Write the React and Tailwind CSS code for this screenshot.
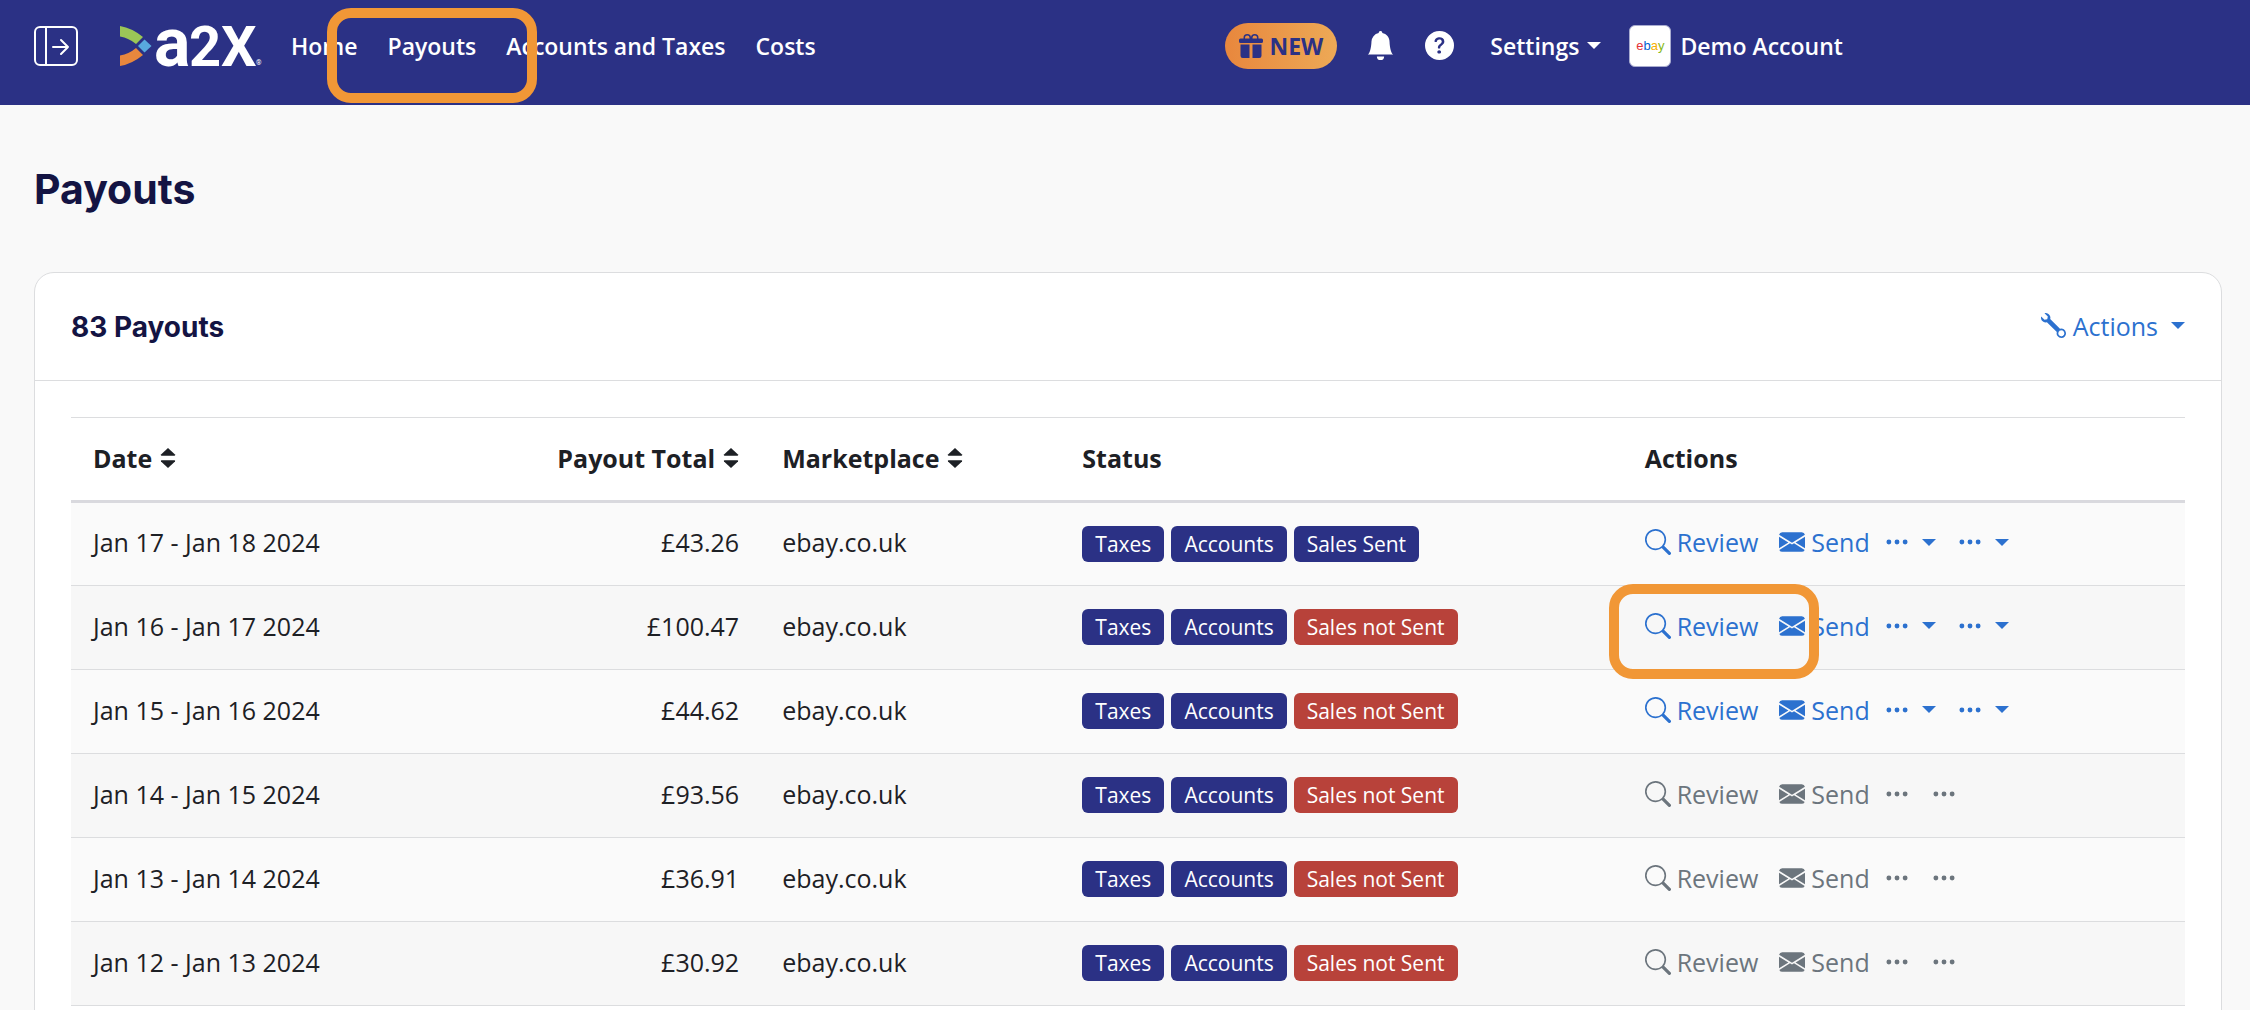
import {
  BsBellFill,
  BsEnvelopeFill,
  BsGiftFill,
  BsQuestionCircleFill,
  BsSearch,
  BsThreeDots,
  BsWrench,
} from 'react-icons/bs';
import clsx from 'clsx';

const payouts = [
  { date: 'Jan 17 - Jan 18 2024', total: '£43.26', sent: true, active: true },
  { date: 'Jan 16 - Jan 17 2024', total: '£100.47', sent: false, active: true, highlight: true },
  { date: 'Jan 15 - Jan 16 2024', total: '£44.62', sent: false, active: true },
  { date: 'Jan 14 - Jan 15 2024', total: '£93.56', sent: false, active: false },
  { date: 'Jan 13 - Jan 14 2024', total: '£36.91', sent: false, active: false },
  { date: 'Jan 12 - Jan 13 2024', total: '£30.92', sent: false, active: false },
];

function Caret() {
  return (
    <svg viewBox="0 0 14 7" className="w-3.5 h-[7px] shrink-0" fill="currentColor" aria-hidden="true">
      <path d="M0 0h14L7 7z" />
    </svg>
  );
}

function SortIcon() {
  return (
    <svg viewBox="0 0 16 20" className="w-4 h-5 shrink-0" fill="currentColor" aria-hidden="true">
      <path d="M8 0l7 6.500q.6 1.300-.8 1.300H1.800Q.4 7.800 1 6.500z" />
      <path d="M8 20l7-6.500q.6-1.300-.8-1.300H1.800Q.4 12.200 1 13.500z" />
    </svg>
  );
}

function Highlight({ className }) {
  return (
    <span
      aria-hidden="true"
      className={clsx('absolute w-[210px] h-[95px] border-10 border-[#f19736] rounded-3xl pointer-events-none z-10', className)}
    />
  );
}

function Logo() {
  return (
    <a href="#" aria-label="a2X">
      <svg viewBox="0 0 142 40" className="w-[142px] h-10 overflow-visible font-['Roboto',sans-serif] font-bold">
        <path d="M0 0q12 2 23 11l-7 7Q9 12 0 10.500z" fill="#9bc657" />
        <path d="M24.500 13.500l7 6.500-7 6.500-6.500-6.500z" fill="#58a9de" />
        <path d="M0 40q12-2 23-11l-7-7Q9 28 0 29.500z" fill="#e8873d" />
        <g fill="#fff">
          <text x="34" y="40" fontSize="68">a</text>
          <text x="69" y="40" fontSize="56">2</text>
          <text x="101" y="40" fontSize="56">X</text>
          <text x="136" y="39" fontSize="7" fontWeight="400">®</text>
        </g>
      </svg>
    </a>
  );
}

function Navbar() {
  return (
    <header className="bg-[#2b3185] text-white">
      <div className="flex items-center h-[105px] px-[34px] pb-3.5 text-[23px] leading-9 font-semibold whitespace-nowrap">
        <button type="button" aria-label="Expand sidebar">
          <svg viewBox="0 0 44 40" className="w-11 h-10" fill="none" stroke="currentColor" strokeWidth="2" strokeLinecap="round" strokeLinejoin="round">
            <rect x="1" y="1" width="42" height="38" rx="5" />
            <path d="M12 1v38M19 21h15M27 14l7 7-7 7" />
          </svg>
        </button>
        <div className="ml-[42px]">
          <Logo />
        </div>
        <nav className="flex gap-[30px] ml-[29px]">
          <a href="#">Home</a>
          <a href="#" className="relative">
            Payouts
            <Highlight className="-left-[61px] -top-5" />
          </a>
          <a href="#">Accounts and Taxes</a>
          <a href="#">Costs</a>
        </nav>
        <div className="flex items-center ml-auto mr-[17.1%]">
          <button type="button" className="flex items-center gap-[7px] h-[46px] px-3.5 rounded-full bg-linear-to-r from-[#e8873d] to-[#eda956] text-[#2b3185] font-bold">
            <BsGiftFill className="size-6" />
            NEW
          </button>
          <button type="button" aria-label="Notifications" className="ml-[29px]">
            <BsBellFill className="size-[29px]" />
          </button>
          <button type="button" aria-label="Help" className="ml-[30px]">
            <BsQuestionCircleFill className="size-[29px]" />
          </button>
          <button type="button" className="flex items-center gap-2 ml-9">
            Settings
            <Caret />
          </button>
          <a href="#" className="flex items-center gap-[9px] ml-7">
            <span className="flex items-center justify-center size-[42px] rounded-md bg-white border border-[#a9acd0] font-['Liberation_Sans',sans-serif] text-[13px] leading-none font-normal">
              <span className="text-[#e53238]">e</span>
              <span className="text-[#0064d2]">b</span>
              <span className="text-[#f5af02]">a</span>
              <span className="text-[#86b817]">y</span>
            </span>
            Demo Account
          </a>
        </div>
      </div>
    </header>
  );
}

function Badge({ danger, children }) {
  return (
    <span className={clsx('px-[13px] rounded-md text-[21px] leading-9 text-white', danger ? 'bg-[#b8423a]' : 'bg-[#2b3185]')}>
      {children}
    </span>
  );
}

function MoreButton({ active, label }) {
  return (
    <button type="button" aria-label={label} disabled={!active} className="flex items-center gap-3">
      <BsThreeDots className="size-[26px]" />
      {active && <Caret />}
    </button>
  );
}

function RowActions({ active }) {
  return (
    <div className={clsx('flex items-center', active ? 'text-[#2c71cf]' : 'text-[#6c757d]')}>
      <button type="button" disabled={!active} className="flex items-center gap-1.5">
        <BsSearch className="size-[26px]" />
        Review
      </button>
      <button type="button" disabled={!active} className="flex items-center gap-1.5 ml-[21px]">
        <BsEnvelopeFill className="size-[26px]" />
        Send
      </button>
      <div className="flex gap-[21px] ml-3.5">
        <MoreButton active={active} label="More send options" />
        <MoreButton active={active} label="More actions" />
      </div>
    </div>
  );
}

function PayoutsTable() {
  return (
    <table className="w-full table-fixed border-t border-[#dcdddf] whitespace-nowrap text-left">
      <thead>
        <tr className="h-[84px] border-b-3 border-[#d9d9de] [&>th]:pl-[22px] [&>th]:pr-[21px] [&>th]:pb-0.5 [&>th]:font-bold">
          <th scope="col" className="w-[20%]">
            <button type="button" className="flex items-center gap-2">Date <SortIcon /></button>
          </th>
          <th scope="col" className="w-[12.6%]">
            <button type="button" className="flex items-center gap-2 ml-auto">Payout Total <SortIcon /></button>
          </th>
          <th scope="col" className="w-[14.2%]">
            <button type="button" className="flex items-center gap-2">Marketplace <SortIcon /></button>
          </th>
          <th scope="col" className="w-[26.6%]">Status</th>
          <th scope="col">Actions</th>
        </tr>
      </thead>
      <tbody>
        {payouts.map((payout) => (
          <tr key={payout.date} className="h-[84px] border-b border-[#dcdddf] odd:bg-[#fafafa] even:bg-[#f7f7f7] [&>td]:pl-[22px] [&>td]:pr-[21px] [&>td]:pb-1">
            <td>{payout.date}</td>
            <td className="text-right">{payout.total}</td>
            <td>ebay.co.uk</td>
            <td>
              <div className="flex gap-[7px] pt-[3px]">
                <Badge>Taxes</Badge>
                <Badge>Accounts</Badge>
                <Badge danger={!payout.sent}>{payout.sent ? 'Sales Sent' : 'Sales not Sent'}</Badge>
              </div>
            </td>
            <td className="relative">
              <RowActions active={payout.active} />
              {payout.highlight && <Highlight className="-left-3.5 -top-0.5" />}
            </td>
          </tr>
        ))}
      </tbody>
    </table>
  );
}

function App() {
  return (
    <div className="h-screen overflow-hidden bg-[#f9f9f9] text-[#1d2025] font-['Open_Sans',sans-serif]">
      <Navbar />
      <main className="pl-[34px] pr-7 pt-[54px]">
        <h1 className="font-['Inter',sans-serif] text-[41px] leading-[60px] font-bold text-[#141443]">Payouts</h1>
        <section className="mt-[53px] bg-white border border-[#dcdddf] rounded-[20px] text-[25px] leading-9">
          <div className="flex items-center justify-between h-[108px] px-9 border-b border-[#dcdddf]">
            <h2 className="font-['Inter',sans-serif] text-[28px] font-bold text-[#141443]">83 Payouts</h2>
            <button type="button" className="flex items-center gap-[7px] pb-0.5 text-[#2c71cf]">
              <BsWrench />
              Actions
              <span className="ml-1.5">
                <Caret />
              </span>
            </button>
          </div>
          <div className="p-9">
            <PayoutsTable />
          </div>
        </section>
      </main>
    </div>
  );
}

export default App;
